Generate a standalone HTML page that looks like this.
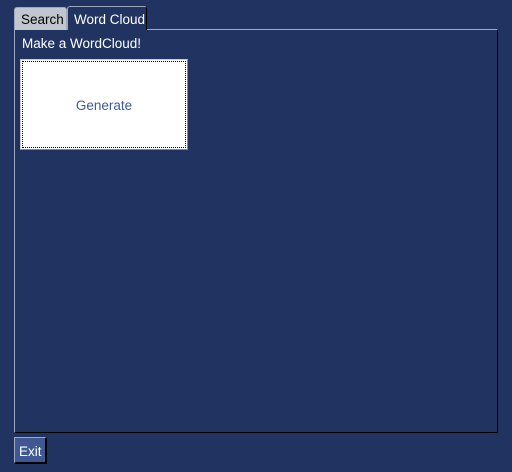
<!DOCTYPE html>
<html><head><style>
body{margin:0;width:512px;height:472px;background:#213361;font-family:"Liberation Sans",sans-serif;font-size:13px;position:relative;overflow:hidden}
.a{position:absolute;box-sizing:border-box;white-space:nowrap}
</style></head><body>
<div class="a" style="left:14px;top:29px;width:484px;height:404px;border-top:1px solid #a0a8bc;border-left:1px solid #a0a8bc;border-right:1px solid #000;border-bottom:1px solid #000"></div>
<div class="a" style="left:14px;top:7px;width:53px;height:23px;background:#c2c6ce;border:1px solid #a0a8bc;border-bottom:none;border-radius:3px 3px 0 0;color:#000;padding:4px 0 0 6px;font-size:13.5px">Search</div>
<div class="a" style="left:67px;top:6px;width:80px;height:24px;background:#213361;border:1px solid #a0a8bc;border-right:1px solid #000;border-bottom:none;border-radius:3px 3px 0 0;color:#fff;padding:5px 0 0 6px;font-size:13.5px">Word Cloud</div>
<div class="a" style="left:22px;top:36px;color:#fff;font-size:13.5px">Make a WordCloud!</div>
<div class="a" style="left:20px;top:59px;width:168px;height:91px;background:#fff;border:1px solid #ccc;border-right-color:#888;border-bottom-color:#888">
<div class="a" style="left:1px;top:1px;right:1px;bottom:1px;border:1px dotted #000"></div>
<div class="a" style="left:0;right:0;top:38px;text-align:center;color:#3d5a99;font-size:13.5px">Generate</div></div>
<div class="a" style="left:14px;top:437px;width:33px;height:27px;background:#3f5894;border-top:1px solid #a0a8bc;border-left:1px solid #a0a8bc;border-right:2px solid #000;border-bottom:2px solid #000;color:#fff;padding:6px 0 0 4px;font-size:13.5px">Exit</div>
</body></html>
